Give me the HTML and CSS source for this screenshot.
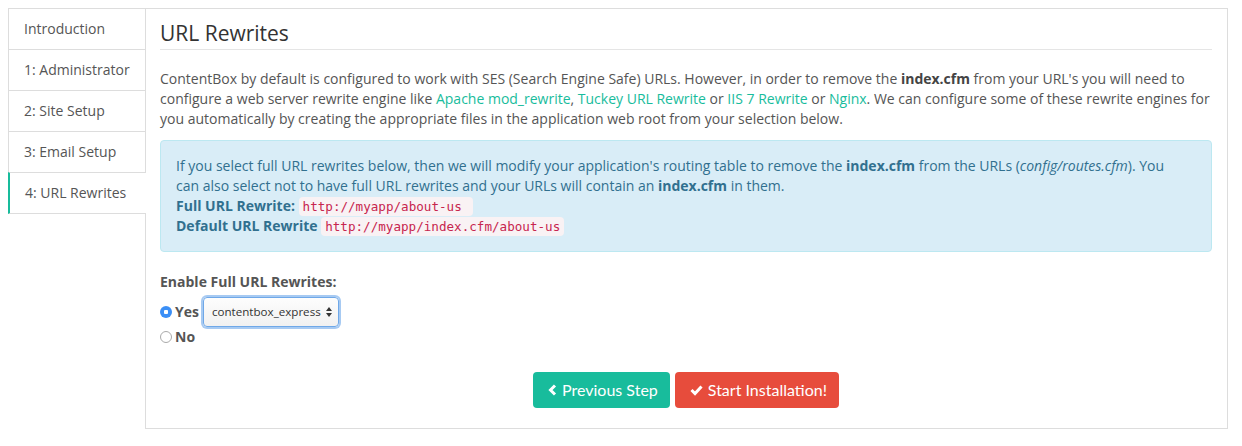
FILE: index.html
```html
<!DOCTYPE html>
<html lang="en">
<head>
<meta charset="utf-8">
<title>ContentBox Installer - URL Rewrites</title>
<link rel="stylesheet" href="styles.css">
</head>
<body>
<div class="wizard">
  <ul class="steps">
    <li class="step">Introduction</li>
    <li class="step">1: Administrator</li>
    <li class="step">2: Site Setup</li>
    <li class="step">3: Email Setup</li>
    <li class="step active">4: URL Rewrites</li>
  </ul>
  <section class="panel">
    <h2 class="title">URL Rewrites</h2>
    <p class="intro">ContentBox by default is configured to work with SES (Search Engine Safe) URLs. However, in order to remove the <strong>index.cfm</strong> from your URL's you will need to configure a web server rewrite engine like <a class="link" href="#">Apache mod_rewrite</a>, <a class="link" href="#">Tuckey URL Rewrite</a> or <a class="link" href="#">IIS 7 Rewrite</a> or <a class="link" href="#">Nginx</a>. We can configure some of these rewrite engines for you automatically by creating the appropriate files in the application web root from your selection below.</p>
    <div class="alert">
      If you select full URL rewrites below, then we will modify your application's routing table to remove the <strong>index.cfm</strong> from the URLs (<em>config/routes.cfm</em>). You can also select not to have full URL rewrites and your URLs will contain an <strong>index.cfm</strong> in them.<br>
      <strong>Full URL Rewrite:</strong> <code class="code">http://myapp/about-us&nbsp;</code><br>
      <strong>Default URL Rewrite</strong> <code class="code">http://myapp/index.cfm/about-us</code>
    </div>
    <div class="field">
      <div class="field-label">Enable Full URL Rewrites:</div>
      <div class="option option-yes">
        <span class="radio checked"></span>
        <span class="option-text">Yes</span>
        <span class="select">
          <span class="select-value">contentbox_express</span>
          <svg class="select-arrows" width="6" height="10" viewBox="0 0 6 10"><path d="M3 0 L6 4 L0 4 Z M0 6 L6 6 L3 10 Z" fill="#333"/></svg>
        </span>
      </div>
      <div class="option">
        <span class="radio"></span>
        <span class="option-text">No</span>
      </div>
    </div>
    <div class="actions">
      <button class="btn btn-prev" type="button">
        <svg class="btn-icon" width="9" height="12" viewBox="0 0 9 12"><polyline points="7,1.5 2.5,6 7,10.5" fill="none" stroke="#fff" stroke-width="3"/></svg>
        Previous Step
      </button>
      <button class="btn btn-start" type="button">
        <svg class="btn-icon" width="13" height="12" viewBox="0 0 13 12"><polyline points="1.5,6 5,9.5 11.5,2.5" fill="none" stroke="#fff" stroke-width="3"/></svg>
        Start Installation!
      </button>
    </div>
  </section>
</div>
</body>
</html>
```

FILE: styles.css
```css
html, body {
  background: #fff;
}
body {
  margin: 8px;
  font-family: "Open Sans", "DejaVu Sans", sans-serif;
  font-size: 14px;
  line-height: 20px;
  color: #555;
}
.wizard {
  display: flex;
  align-items: flex-start;
  width: 1220px;
}
.steps {
  list-style: none;
  margin: 0;
  padding: 0;
  width: 137px;
  flex: none;
  position: relative;
  z-index: 1;
}
.step {
  height: 40px;
  line-height: 40px;
  padding-left: 15px;
  border-top: 1px solid #ddd;
  border-left: 1px solid #ddd;
  color: #555;
  background: #fff;
}
.step.active {
  border-left: 2px solid #18bc9c;
  border-bottom: 1px solid #ddd;
  padding-left: 15px;
  margin-right: -1px;
}
.panel {
  flex: 1;
  border: 1px solid #ddd;
  padding: 9px 15px 20px 14px;
}
.title {
  margin: 0;
  font-size: 21px;
  font-weight: 400;
  line-height: 30px;
  color: #333;
  padding-bottom: 1px;
  border-bottom: 1px solid #e5e5e5;
}
.intro {
  margin: 19px 0 11px;
  line-height: 20px;
}
.intro strong {
  color: #444;
}
.link {
  color: #18bc9c;
  text-decoration: none;
}
.alert {
  background: #d9edf7;
  border: 1px solid #bce8f1;
  border-radius: 4px;
  color: #31708f;
  padding: 15px 45px 15px 15px;
  margin-bottom: 20px;
}
.code {
  font-family: "DejaVu Sans Mono", "Liberation Mono", monospace;
  font-size: 90%;
  line-height: 1;
  color: #c7254e;
  background: #f9f2f4;
  padding: 2px 4px;
  border-radius: 4px;
}
.field-label {
  font-weight: 700;
  color: #555;
  margin-bottom: 5px;
}
.option {
  display: flex;
  align-items: center;
  height: 20px;
}
.option-yes {
  height: 30px;
}
.radio {
  width: 12px;
  height: 12px;
  box-sizing: border-box;
  border: 1px solid #aaa;
  border-radius: 50%;
  background: #fff;
  margin-right: 3px;
  flex: none;
}
.radio.checked {
  border: none;
  background: radial-gradient(circle, #fff 0 2px, #3b8ff6 2.5px);
}
.option-text {
  font-weight: 700;
  color: #555;
}
.select {
  position: relative;
  display: flex;
  align-items: center;
  width: 136px;
  height: 30px;
  box-sizing: border-box;
  margin-left: 4px;
  padding-left: 8px;
  border: 1px solid #6fa8e8;
  border-radius: 4px;
  background: linear-gradient(#fdfdfd, #f1f1f1);
  box-shadow: 0 0 0 2px rgba(94, 158, 232, 0.55);
  font-size: 11.6px;
  color: #333;
}
.select-arrows {
  position: absolute;
  right: 6px;
  top: 9px;
}
.actions {
  display: flex;
  justify-content: center;
  gap: 5px;
  margin-top: 25px;
}
.btn {
  display: flex;
  align-items: center;
  gap: 5px;
  height: 36px;
  border: none;
  border-radius: 4px;
  padding: 0 12px 0 15px;
  color: #fff;
  font-family: Lato, "Open Sans", sans-serif;
  font-size: 16px;
  line-height: 20px;
}
.btn-prev {
  background: #18bc9c;
}
.btn-start {
  background: #e74c3c;
}
.btn-icon {
  flex: none;
}
```
